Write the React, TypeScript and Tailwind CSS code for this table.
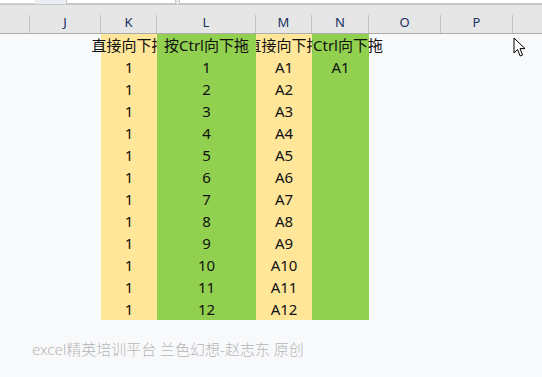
import React from 'react';

const cols = [
  { key: 'pad', label: '', w: 'w-[30px]' },
  { key: 'J', label: 'J', w: 'w-[71px]' },
  { key: 'K', label: 'K', w: 'w-[56px]' },
  { key: 'L', label: 'L', w: 'w-[99px]' },
  { key: 'M', label: 'M', w: 'w-[56px]' },
  { key: 'N', label: 'N', w: 'w-[57px]' },
  { key: 'O', label: 'O', w: 'w-[72px]' },
  { key: 'P', label: 'P', w: 'w-[72px]' },
];

const nums = Array.from({ length: 12 }, (_, i) => i + 1);

const Cursor = () => (
  <svg width="14" height="21" viewBox="0 0 14 21" className="absolute left-[513px] top-[37px]">
    <path
      d="M1 1 L1 16 L4.5 12.5 L7.2 19 L9.6 18 L7 11.6 L12 11.6 Z"
      fill="#ffffff"
      stroke="#000000"
      strokeWidth="1"
      strokeLinejoin="miter"
    />
  </svg>
);

const HeaderBar = () => (
  <div className="flex h-[29px] bg-[#e6e6e6] border-b border-[#ababab]">
    {cols.map((c) => (
      <div key={c.key} className={`${c.w} flex shrink-0`}>
        <div className="flex-1 flex items-end justify-center pb-[1px] text-[13px] text-[#15315f]">{c.label}</div>
        <div className="w-px h-[18px] self-end bg-[#c4c4c4]" />
      </div>
    ))}
    <div className="flex-1" />
  </div>
);

const Cell = ({ w, bg, children, clip }: { w: string; bg?: string; children?: React.ReactNode; clip?: string }) => (
  <div className={`${w} ${bg ?? ''} ${clip ?? ''} relative shrink-0 h-[22px] flex items-center justify-center whitespace-nowrap`}>
    {children}
  </div>
);

const Row = ({ k, l, m, n, first }: { k: React.ReactNode; l: React.ReactNode; m: React.ReactNode; n?: React.ReactNode; first?: boolean }) => (
  <div className="flex text-[15px]">
    <div className="w-[101px] shrink-0" />
    <Cell w="w-[56px]" bg="bg-[#ffe699]" clip={first ? '[clip-path:inset(0_0_0_-60px)]' : ''}>{k}</Cell>
    <Cell w="w-[99px]" bg="bg-[#92d050]" clip="overflow-hidden">{l}</Cell>
    <Cell w="w-[56px]" bg="bg-[#ffe699]" clip="overflow-hidden">{m}</Cell>
    <Cell w="w-[57px]" bg="bg-[#92d050]" clip={first ? '[clip-path:inset(0_-60px_0_0)]' : ''}>{n}</Cell>
  </div>
);

const App = () => {
  return (
    <div className="relative w-[542px] h-[377px] overflow-hidden bg-[#f8f9fb] font-['Noto_Sans','Noto_Sans_CJK_SC',sans-serif] font-normal text-[14px] text-[#111]">
      {/* sheet tab strip */}
      <div className="flex h-[5px] bg-[#e6e6e6] border-b border-[#c6c6c6]">
        <div className="w-[35px] h-[4px] bg-white border-b border-[#d4d4d4]" />
        <div className="w-[31px] h-[4px] bg-[#e9ecf0]" />
        <div className="w-[110px] h-[4px] bg-white border-x border-b border-[#c8c8c8]" />
        <div className="w-[3px]" />
        <div className="flex-1 h-[4px] bg-white border-l border-b border-[#c8c8c8]" />
      </div>

      <HeaderBar />

      <div className="flex flex-col">
        <Row first k="直接向下拖" l="按Ctrl向下拖" m="直接向下拖" n="按Ctrl向下拖" />
        {nums.map((i) => (
          <Row key={i} k="1" l={i} m={`A${i}`} n={i === 1 ? 'A1' : undefined} />
        ))}
      </div>

      <div className="pl-[32px] pt-[18px] text-[15px] font-light text-[#b6b6b6]">excel精英培训平台 兰色幻想-赵志东 原创</div>

      <Cursor />
    </div>
  );
};

export default App;
